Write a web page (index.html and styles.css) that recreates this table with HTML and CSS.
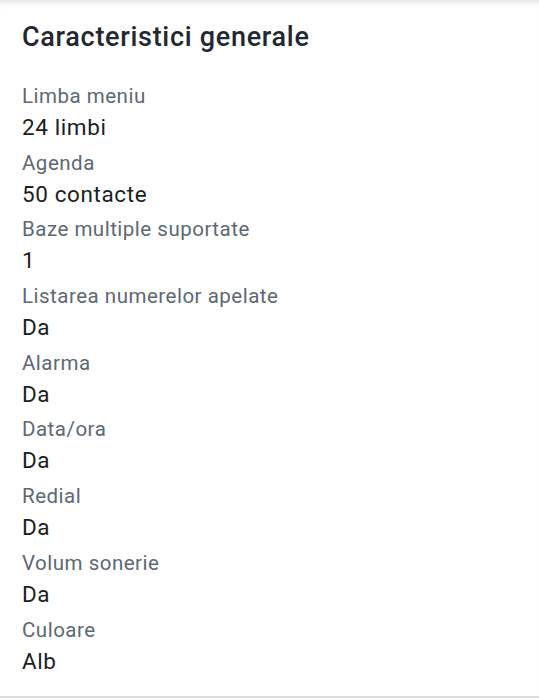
FILE: index.html
```html
<!DOCTYPE html>
<html lang="ro">
<head>
    <meta charset="UTF-8">
    <meta name="viewport" content="width=device-width, initial-scale=1.0">
    <title>Caracteristici generale</title>
    <link rel="stylesheet" href="styles.css">
</head>
<body>
    <section class="specs">
        <h2 class="specs-title">Caracteristici generale</h2>
        <dl class="specs-list">
            <div class="spec">
                <dt>Limba meniu</dt>
                <dd>24 limbi</dd>
            </div>
            <div class="spec">
                <dt>Agenda</dt>
                <dd>50 contacte</dd>
            </div>
            <div class="spec">
                <dt>Baze multiple suportate</dt>
                <dd>1</dd>
            </div>
            <div class="spec">
                <dt>Listarea numerelor apelate</dt>
                <dd>Da</dd>
            </div>
            <div class="spec">
                <dt>Alarma</dt>
                <dd>Da</dd>
            </div>
            <div class="spec">
                <dt>Data/ora</dt>
                <dd>Da</dd>
            </div>
            <div class="spec">
                <dt>Redial</dt>
                <dd>Da</dd>
            </div>
            <div class="spec">
                <dt>Volum sonerie</dt>
                <dd>Da</dd>
            </div>
            <div class="spec">
                <dt>Culoare</dt>
                <dd>Alb</dd>
            </div>
        </dl>
    </section>
</body>
</html>
```

FILE: styles.css
```css
body {
    margin: 0;
    font-family: Roboto, "Noto Sans", sans-serif;
    background-color: #ffffff;
}
.specs {
    height: 698px;
    padding: 19px 22px 0;
    box-sizing: border-box;
    border-bottom: 2px solid #dcdcdc;
    box-shadow: inset 0 8px 7px -6px rgba(0, 0, 0, 0.13);
}
.specs-title {
    margin: 0 0 27px;
    font-size: 27px;
    line-height: 36px;
    font-weight: 500;
    color: #222831;
    letter-spacing: 0.7px;
}
.specs-list {
    margin: 0;
}
.spec {
    padding-bottom: 4.7px;
}
.spec dt {
    font-size: 20.5px;
    line-height: 28px;
    color: #5c6874;
    letter-spacing: 0.5px;
}
.spec dd {
    margin: 0;
    font-size: 22.5px;
    line-height: 34px;
    color: #1b1e22;
    letter-spacing: 0.6px;
}
```
